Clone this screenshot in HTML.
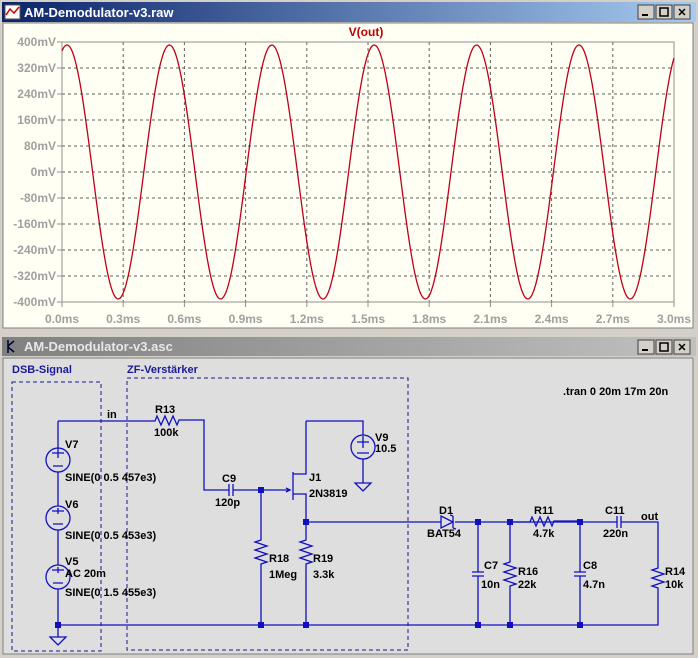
<!DOCTYPE html>
<html><head><meta charset="utf-8"><style>
body{margin:0;width:698px;height:658px;overflow:hidden;background:#d4d0c8;font-family:"Liberation Sans",sans-serif}
svg{display:block}
</style></head><body>
<svg width="698" height="658" xmlns="http://www.w3.org/2000/svg" font-family="Liberation Sans, sans-serif">
<defs>
<linearGradient id="tb1" x1="0" x2="1"><stop offset="0" stop-color="#0a246a"/><stop offset="1" stop-color="#a6caf0"/></linearGradient>
<linearGradient id="tb2" x1="0" x2="1"><stop offset="0" stop-color="#808080"/><stop offset="1" stop-color="#c0c0c0"/></linearGradient>
</defs>
<!-- top window -->
<rect x="0" y="0" width="698" height="332" fill="#d4d0c8"/>
<rect x="2" y="2" width="694" height="20" fill="url(#tb1)"/>
<rect x="5" y="5" width="15" height="14" fill="#fff" stroke="#555"/>
<path d="M6 15 L10 9 L14 13 L19 7" stroke="#c00" fill="none" stroke-width="1.5"/>
<text x="24" y="17" fill="#fff" font-size="13" font-weight="bold">AM-Demodulator-v3.raw</text>
<g font-size="11" font-weight="bold" text-anchor="middle">
<rect x="656" y="5" width="16" height="14" fill="#d4d0c8" stroke="#404040"/><rect x="674" y="5" width="16" height="14" fill="#d4d0c8" stroke="#404040"/><rect x="638" y="5" width="16" height="14" fill="#d4d0c8" stroke="#404040"/>
<rect x="642" y="14" width="6" height="2" fill="#000"/><rect x="660" y="8" width="8" height="8" fill="none" stroke="#000" stroke-width="1.5"/>
<text x="682" y="16">✕</text></g>
<rect x="3" y="23" width="690" height="305" fill="#fffff4" stroke="#808080"/>
<text x="366" y="36" fill="#c00000" font-size="12" text-anchor="middle" font-weight="bold">V(out)</text>
<g id="grid" stroke="#606060" stroke-dasharray="3,3" stroke-width="1"></g>
<rect x="62" y="42" width="612" height="260" fill="none" stroke="#909090"/>
<g id="ylab" fill="#a0a0a0" font-size="12" font-weight="bold" text-anchor="end"></g>
<path id="sine" fill="none" stroke="#c00018" stroke-width="1.3"/>
<!-- bottom window -->
<rect x="0" y="334" width="698" height="324" fill="#d4d0c8"/>
<rect x="2" y="337" width="694" height="19" fill="url(#tb2)"/>
<path d="M8 340 v13 M8 346 l6 -5 M8 347 l6 5" stroke="#003" stroke-width="1.5" fill="none"/>
<text x="24" y="351" fill="#e8e8e8" font-size="13" font-weight="bold">AM-Demodulator-v3.asc</text>
<g font-size="11" font-weight="bold" text-anchor="middle">
<rect x="638" y="340" width="16" height="14" fill="#d4d0c8" stroke="#404040"/><rect x="656" y="340" width="16" height="14" fill="#d4d0c8" stroke="#404040"/><rect x="674" y="340" width="16" height="14" fill="#d4d0c8" stroke="#404040"/>
<rect x="642" y="349" width="6" height="2" fill="#000"/><rect x="660" y="343" width="8" height="8" fill="none" stroke="#000" stroke-width="1.5"/>
<text x="682" y="351">✕</text></g>
<rect x="3" y="358" width="690" height="296" fill="#dedede" stroke="#808080"/>
<g font-size="11" font-weight="bold">
<text x="12" y="373" fill="#1a1a9a">DSB-Signal</text>
<text x="127" y="373" fill="#1a1a9a">ZF-Verstärker</text>
<text x="563" y="395" fill="#000">.tran 0 20m 17m 20n</text>
</g>
<g fill="none" stroke="#1a1a8a" stroke-dasharray="4,3">
<rect x="12" y="382" width="89" height="269"/>
<rect x="127" y="378" width="281" height="272"/>
</g>
<g fill="none" stroke="#1010c0" stroke-width="1.3">
<path d="M58 421 H155 l2 -5 l4 9 l4 -9 l4 9 l4 -9 l4 9 l2 -5 H204 V490 H229 M233 490 H290"/>
<path d="M229 484 v12 M233 484 v12"/>
<path d="M58 421 V448 M58 472 V506 M58 530 V565 M58 589 V637"/>
<path d="M58 625 H658 V588 l-6 -2 l12 -4 l-12 -4 l12 -4 l-12 -4 l6 -2 V522 H621 M617 522 H455"/>
<path d="M617 516 v12 M621 516 v12"/>
<circle cx="58" cy="460" r="12"/><circle cx="58" cy="518" r="12"/><circle cx="58" cy="577" r="12"/>
<path d="M52 453 h6 v-5 M58 453 v5 M58 453 h6 M53 466 h10 M52 511 h12 M58 508 v6 M53 524 h10 M52 570 h12 M58 567 v6 M53 583 h10"/>
<path d="M50 637 h16 l-8 8 z"/>
<path d="M306 421 H363 V435 M363 459 V483 M355 483 h16 l-8 8 z"/>
<circle cx="363" cy="447" r="12"/><path d="M357 442 h12 M363 436 v12 M357 453 h12"/>
<path d="M293 472 V500 M293 474 H306 V421 M293 494 H306 V522 H441"/>
<path d="M286 488 l4 2 l-4 2"/>
<path d="M261 490 V540 l-6 2 l12 4 l-12 4 l12 4 l-12 4 l12 4 l-6 2 V625"/>
<path d="M306 522 V540 l-6 2 l12 4 l-12 4 l12 4 l-12 4 l12 4 l-6 2 V625"/>
<path d="M441 516 l12 6 l-12 6 z M453 516 v12 M453 516 l-3 -1 M453 528 l3 1"/>
<path d="M478 522 V572 M472 572 h12 M472 576 h12 M478 576 V625"/>
<path d="M580 522 V572 M574 572 h12 M574 576 h12 M580 576 V625"/>
<path d="M510 522 V562 l-6 2 l12 4 l-12 4 l12 4 l-12 4 l12 4 l-6 2 V625"/>
<path d="M510 522 H530 l2 -5 l4 9 l4 -9 l4 9 l4 -9 l4 9 l2 -5 H580"/>
</g>
<g fill="#1010c0">
<rect x="258" y="487" width="6" height="6"/><rect x="303" y="519" width="6" height="6"/><rect x="475" y="519" width="6" height="6"/><rect x="507" y="519" width="6" height="6"/><rect x="577" y="519" width="6" height="6"/>
<rect x="55" y="622" width="6" height="6"/><rect x="258" y="622" width="6" height="6"/><rect x="303" y="622" width="6" height="6"/><rect x="475" y="622" width="6" height="6"/><rect x="507" y="622" width="6" height="6"/><rect x="577" y="622" width="6" height="6"/>
</g>
<g font-size="11" font-weight="bold" fill="#000">
<text x="107" y="418">in</text>
<text x="155" y="413">R13</text><text x="154" y="436">100k</text>
<text x="65" y="448">V7</text><text x="65" y="481">SINE(0 0.5 457e3)</text>
<text x="65" y="508">V6</text><text x="65" y="539">SINE(0 0.5 453e3)</text>
<text x="65" y="565">V5</text><text x="65" y="577">AC 20m</text><text x="65" y="596">SINE(0 1.5 455e3)</text>
<text x="222" y="482">C9</text><text x="215" y="506">120p</text>
<text x="309" y="481">J1</text><text x="309" y="497">2N3819</text>
<text x="375" y="441">V9</text><text x="375" y="452">10.5</text>
<text x="269" y="562">R18</text><text x="269" y="578">1Meg</text>
<text x="313" y="562">R19</text><text x="313" y="578">3.3k</text>
<text x="439" y="514">D1</text><text x="427" y="537">BAT54</text>
<text x="484" y="569">C7</text><text x="481" y="588">10n</text>
<text x="518" y="575">R16</text><text x="518" y="588">22k</text>
<text x="534" y="514">R11</text><text x="533" y="537">4.7k</text>
<text x="583" y="569">C8</text><text x="583" y="588">4.7n</text>
<text x="605" y="514">C11</text><text x="603" y="537">220n</text>
<text x="641" y="520">out</text>
<text x="665" y="575">R14</text><text x="665" y="588">10k</text>
</g>
</svg>
<script>
var ns="http://www.w3.org/2000/svg";
var g=document.getElementById("grid"),yl=document.getElementById("ylab");
var labs=["400mV","320mV","240mV","160mV","80mV","0mV","-80mV","-160mV","-240mV","-320mV","-400mV"];
for(var i=0;i<=10;i++){var y=42+i*26;
 if(i>0&&i<10){var l=document.createElementNS(ns,"line");l.setAttribute("x1",62);l.setAttribute("x2",674);l.setAttribute("y1",y);l.setAttribute("y2",y);g.appendChild(l);}
 var t=document.createElementNS(ns,"text");t.setAttribute("x",56);t.setAttribute("y",y+4);t.textContent=labs[i];yl.appendChild(t);
 var tk=document.createElementNS(ns,"line");tk.setAttribute("x1",57);tk.setAttribute("x2",62);tk.setAttribute("y1",y);tk.setAttribute("y2",y);tk.setAttribute("stroke","#909090");yl.appendChild(tk);}
for(var j=0;j<=10;j++){var x=62+j*61.2;
 if(j>0&&j<10){var l=document.createElementNS(ns,"line");l.setAttribute("x1",x);l.setAttribute("x2",x);l.setAttribute("y1",42);l.setAttribute("y2",302);g.appendChild(l);}
 var t=document.createElementNS(ns,"text");t.setAttribute("x",x);t.setAttribute("y",323);t.setAttribute("text-anchor","middle");t.textContent=(j*0.3).toFixed(1)+"ms";yl.appendChild(t);
 var tk=document.createElementNS(ns,"line");tk.setAttribute("x1",x);tk.setAttribute("x2",x);tk.setAttribute("y1",302);tk.setAttribute("y2",307);tk.setAttribute("stroke","#909090");yl.appendChild(tk);}
var d="";for(var x=62;x<=674;x+=1){var y=172-127*Math.cos(2*Math.PI*(x-67)/102.4);d+=(x==62?"M":"L")+x+" "+y.toFixed(1)+" ";}
document.getElementById("sine").setAttribute("d",d);
</script>
</body></html>
